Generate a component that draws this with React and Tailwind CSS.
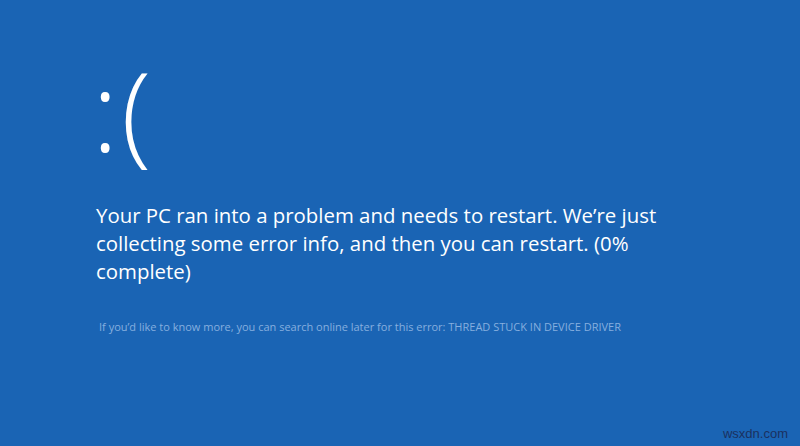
import React from 'react';

const App = () => {
  return (
    <div className="relative w-[800px] h-[446px] overflow-hidden bg-[#1a64b4] text-white" style={{ fontFamily: '"Open Sans", "Liberation Sans", sans-serif' }}>
      <div className="flex flex-col pl-[96px] pt-[55px]">
        <div className="-ml-[4px] text-[110px] leading-[108px] font-light tracking-[3px]">:(</div>
        <p className="mt-[38px] w-[580px] text-[20.4px] leading-[28px]">
          Your PC ran into a problem and needs to restart. We’re just collecting some error info, and then you can restart. (0% complete)
        </p>
        <p className="mt-[35px] pl-[3px] text-[11px] leading-[14px] text-[#86afdf]">
          If you’d like to know more, you can search online later for this error: THREAD STUCK IN DEVICE DRIVER
        </p>
      </div>
      <div className="absolute right-[12px] bottom-[3px] text-[13px] text-[#1a3160]" style={{ fontFamily: '"Liberation Sans", sans-serif' }}>
        wsxdn.com
      </div>
    </div>
  );
};

export default App;
